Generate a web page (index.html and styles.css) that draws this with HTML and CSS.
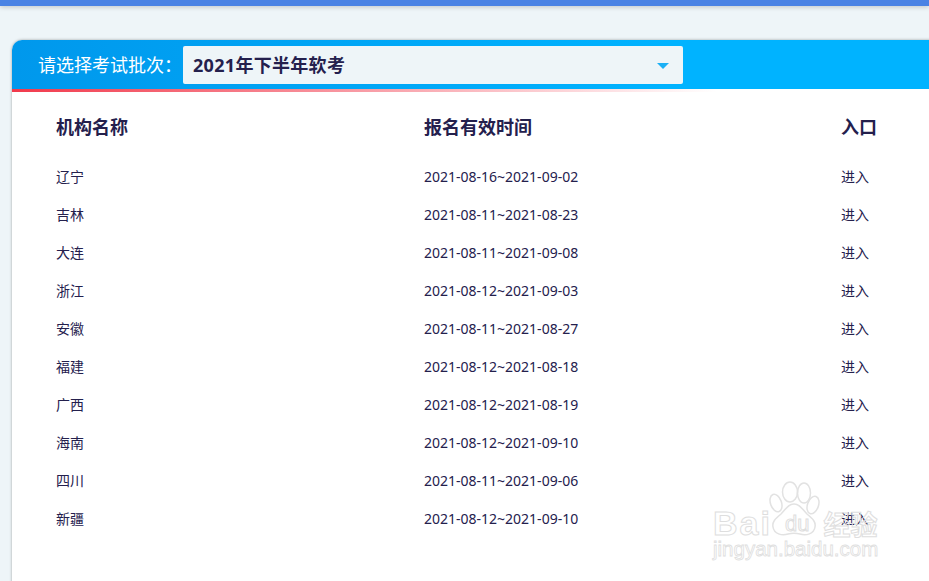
FILE: index.html
```html
<!DOCTYPE html>
<html lang="zh-CN">
<head>
<meta charset="utf-8">
<title>软考报名</title>
<link rel="stylesheet" href="styles.css">
</head>
<body>
<div class="topbar"></div>
<main class="card">
  <header class="card-head">
    <span class="label">请选择考试批次：</span>
    <div class="select">
      <span class="select-text">2021年下半年软考</span>
      <i class="caret"></i>
    </div>
  </header>
  <div class="redline"></div>
  <section class="table">
    <div class="row head"><span>机构名称</span><span>报名有效时间</span><span>入口</span></div>
    <div class="row"><span>辽宁</span><span>2021-08-16~2021-09-02</span><span>进入</span></div>
    <div class="row"><span>吉林</span><span>2021-08-11~2021-08-23</span><span>进入</span></div>
    <div class="row"><span>大连</span><span>2021-08-11~2021-09-08</span><span>进入</span></div>
    <div class="row"><span>浙江</span><span>2021-08-12~2021-09-03</span><span>进入</span></div>
    <div class="row"><span>安徽</span><span>2021-08-11~2021-08-27</span><span>进入</span></div>
    <div class="row"><span>福建</span><span>2021-08-12~2021-08-18</span><span>进入</span></div>
    <div class="row"><span>广西</span><span>2021-08-12~2021-08-19</span><span>进入</span></div>
    <div class="row"><span>海南</span><span>2021-08-12~2021-09-10</span><span>进入</span></div>
    <div class="row"><span>四川</span><span>2021-08-11~2021-09-06</span><span>进入</span></div>
    <div class="row"><span>新疆</span><span>2021-08-12~2021-09-10</span><span>进入</span></div>
  </section>
</main>
<div class="watermark">
  <svg class="paw" width="52" height="58" viewBox="0 0 52 58" fill="none" stroke="#e2e2e2" stroke-width="1.5">
    <ellipse cx="22" cy="12" rx="7.5" ry="10"/>
    <ellipse cx="36" cy="13" rx="6.5" ry="10"/>
    <ellipse cx="8" cy="23" rx="5.5" ry="9" transform="rotate(-20 8 23)"/>
    <ellipse cx="45" cy="25" rx="5.5" ry="9" transform="rotate(20 45 25)"/>
    <path d="M26 24c-6 0-8 5-13 10-6 5-9 8-8 13 1 7 9 9 15 7 4-1 8-1 12 0 6 2 14 0 15-7 1-5-2-8-8-13-5-5-7-10-13-10z"/>
  </svg>
  <div class="wm-line1"><span class="wm-bai">Bai</span><span class="wm-du">du</span><span class="wm-jy">经验</span></div>
  <div class="wm-line2">jingyan.baidu.com</div>
</div>
</body>
</html>
```
FILE: styles.css
```css
* { box-sizing: border-box; }
html, body { margin: 0; height: 100%; }
body {
  width: 929px;
  height: 581px;
  overflow: hidden;
  position: relative;
  background: #eef5f8;
  font-family: "Noto Sans", "Noto Sans CJK SC", sans-serif;
  color: #24204d;
}
.topbar {
  height: 6px;
  background: #4a83e4;
  box-shadow: 0 1px 5px rgba(0, 0, 0, 0.2);
}
.card {
  margin: 34px 0 0 12px;
  width: 940px;
  height: 560px;
  background: #fff;
  border-radius: 10px 0 0 0;
  box-shadow: 0 0 3px rgba(0, 0, 0, 0.35);
}
.card-head {
  height: 49px;
  display: flex;
  align-items: flex-start;
  padding: 6px 0 0 26px;
  border-radius: 10px 0 0 0;
  background: linear-gradient(90deg, #0098ec, #00b3ff 70%);
}
.label {
  width: 145px;
  line-height: 39px;
  font-size: 18px;
  color: #fff;
  white-space: nowrap;
}
.select {
  width: 500px;
  height: 38px;
  display: flex;
  align-items: center;
  justify-content: space-between;
  padding: 0 14px 2px 10px;
  background: #eef5f8;
  border-radius: 2px;
  font-size: 18px;
  font-weight: 700;
  color: #24204d;
}
.select-text { letter-spacing: 0.3px; }
.caret {
  width: 0;
  height: 0;
  border-left: 6px solid transparent;
  border-right: 6px solid transparent;
  border-top: 6px solid #1bb0f5;
  margin-top: 4px;
}
.redline {
  height: 3px;
  background: linear-gradient(90deg, #f13a4c, rgba(241, 58, 76, 0) 75%);
}
.table { padding: 17px 0 0 44px; }
.row {
  display: grid;
  grid-template-columns: 368px 417px 1fr;
  height: 38px;
  align-items: center;
  font-size: 14px;
  color: #24204d;
}
.row.head {
  height: 48px;
  padding-bottom: 14px;
  font-size: 18px;
  font-weight: 700;
}
.watermark {
  position: absolute;
  left: 712px;
  top: 480px;
  width: 180px;
  height: 84px;
  pointer-events: none;
}
.paw { position: absolute; left: 56px; top: 0; }
.wm-line1 {
  position: absolute;
  left: 1px;
  top: 23px;
  width: 170px;
  height: 40px;
  display: flex;
  align-items: center;
  font-family: "Liberation Sans", sans-serif;
  font-weight: 700;
  color: transparent;
  -webkit-text-stroke: 1px #dedede;
}
.wm-bai { font-size: 34px; letter-spacing: 2px; }
.wm-du {
  font-size: 22px;
  margin-left: 13px;
  margin-top: 2px;
  font-weight: 400;
}
.wm-jy {
  font-family: "Noto Sans CJK SC", sans-serif;
  font-size: 27px;
  margin-left: 14px;
}
.wm-line2 {
  position: absolute;
  left: 1px;
  top: 57px;
  font-family: "Liberation Sans", sans-serif;
  font-size: 20.5px;
  color: transparent;
  -webkit-text-stroke: 0.8px #dedede;
}
```
